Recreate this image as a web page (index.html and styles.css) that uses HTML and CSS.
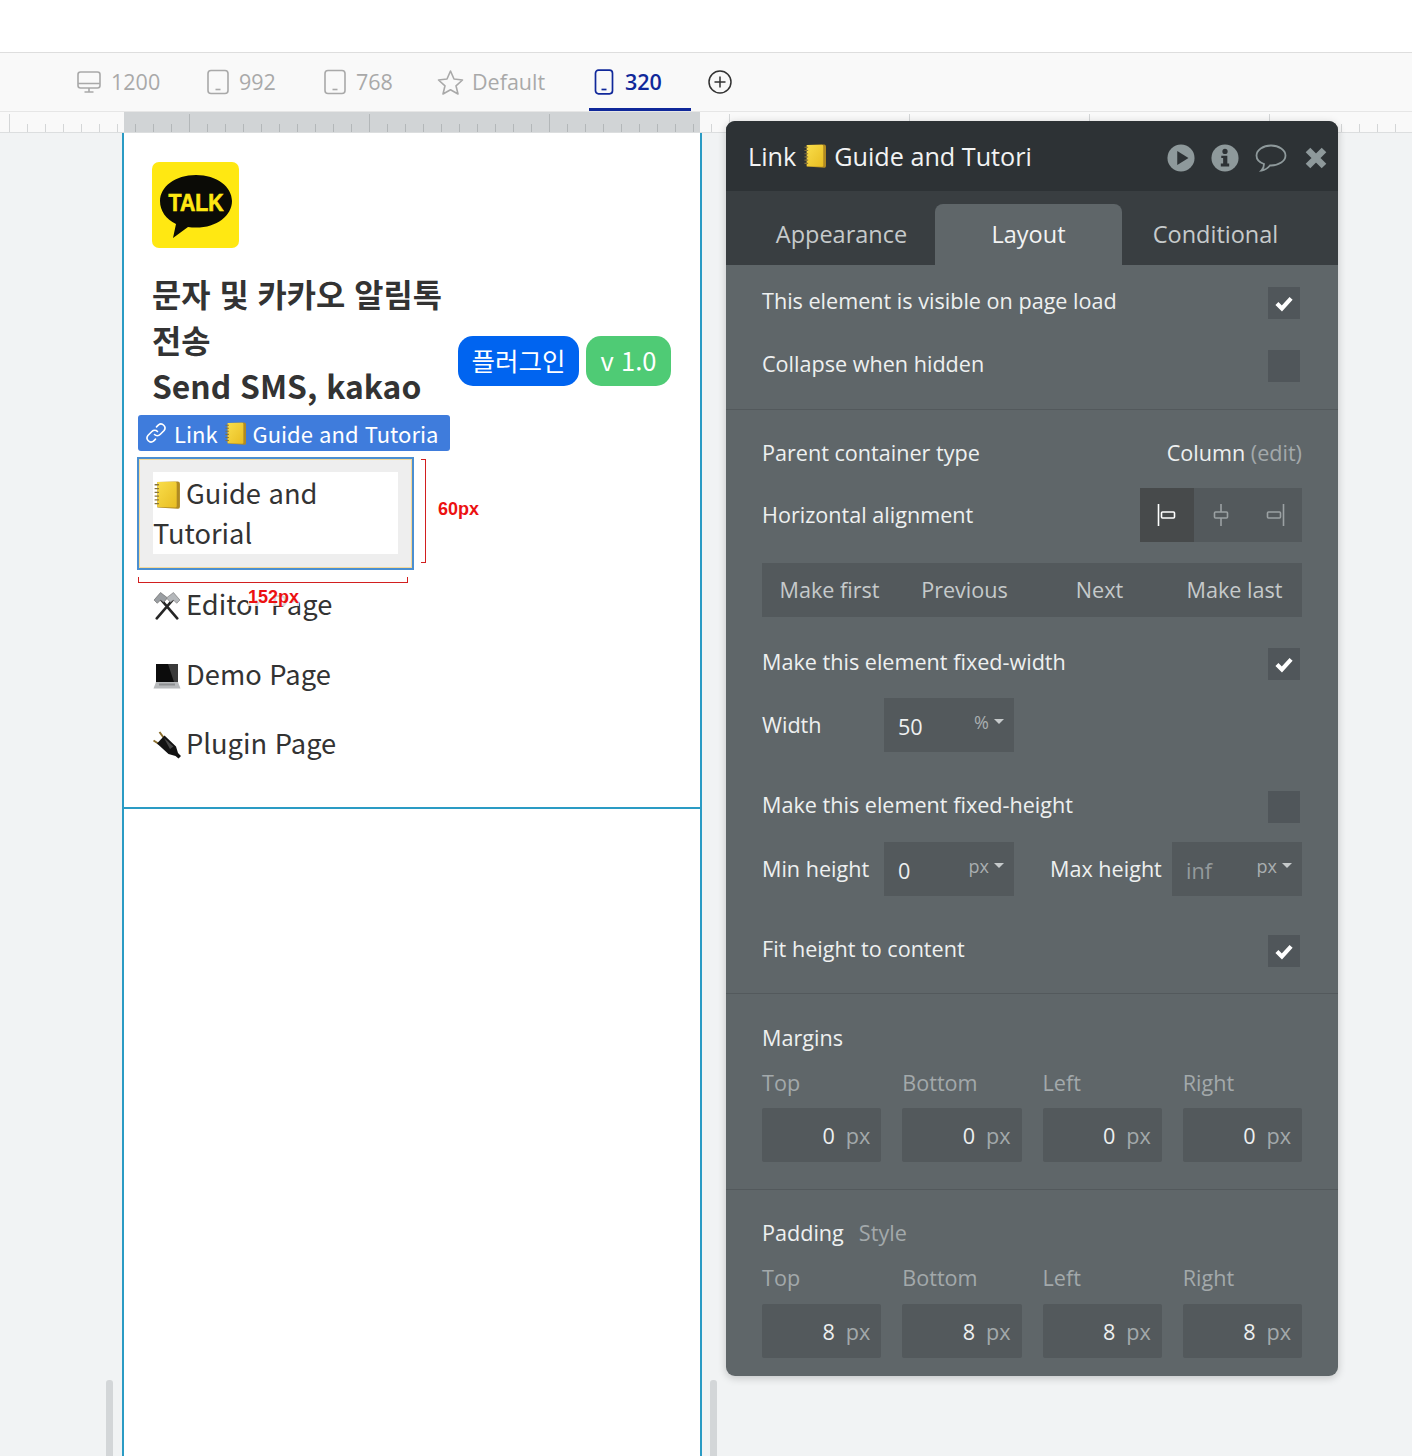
FILE: index.html
```html
<!DOCTYPE html>
<html lang="ko">
<head>
<meta charset="utf-8">
<title>Editor</title>
<link rel="stylesheet" href="styles.css">
</head>
<body>
<svg class="defs" width="0" height="0" aria-hidden="true">
  <defs>
    <linearGradient id="nb" x1="0" y1="0" x2="1" y2="1"><stop offset="0" stop-color="#f9dd4a"/><stop offset="1" stop-color="#e8bd22"/></linearGradient>
    <symbol id="notebook" viewBox="2 1 24 26">
      <path d="M5 2 L24 1.500 Q26 1.500 26 3.500 V25 Q26 27 24 26.800 L5 25.500 Z" fill="#b08a22"/>
      <path d="M5 2 L21.500 1.800 Q23 1.800 23 3.300 V24.500 Q23 25.800 21.500 25.700 L5 25.200 Z" fill="url(#nb)"/>
      <g fill="none" stroke="#87743c" stroke-width="1.200"><path d="M2.500 4.500h4M2.500 8h4M2.500 11.500h4M2.500 15h4M2.500 18.500h4M2.500 22h4"/></g>
    </symbol>
    <symbol id="tools" viewBox="1 1 26 26">
      <path d="M4.500 25.500 L19.500 8 M23.500 25.500 L8.500 8" stroke="#262626" stroke-width="2.400" stroke-linecap="round" fill="none"/>
      <path d="M2 8.500 L8 1.500 L14.500 6.500 L11 10.500 L8 8.500 L5 11.500 Z" fill="#9a9ea2" stroke="#666" stroke-width=".6"/>
      <path d="M26 8.500 L20 1.500 L13.500 6.500 L17 10.500 L20 8.500 L23 11.500 Z" fill="#b5b8bb" stroke="#777" stroke-width=".6"/>
    </symbol>
    <symbol id="laptop" viewBox="0 0 28 28">
      <path d="M3 2 H25 V20 H3 Z" fill="#0c0c0c"/>
      <path d="M15 2 H25 V20 H21 Z" fill="#3a3a3a"/>
      <path d="M3 20 H25 L27.500 26.500 H.5 Z" fill="#b8babc"/>
      <path d="M6 21.500 H22 V23.500 H6 Z" fill="#8e9092"/>
    </symbol>
    <symbol id="plug" viewBox="0 0 28 28">
      <path d="M.5 9.500 L6 13 M6.500 1 L10.500 6.500" stroke="#8a6d2c" stroke-width="2" fill="none"/>
      <path d="M4 12.500 L11.500 4.500 L23 15.500 L25 22 L28 25 L25.500 27.500 L22.500 25 L15.500 23 Z" fill="#121212"/>
      <path d="M11 7 L20.500 15.500 L17 18 Z" fill="#474747"/>
    </symbol>
    <symbol id="tick" viewBox="0 0 24 24">
      <path d="M3.500 12.500 L9.500 18.500 L20.500 6.500" fill="none" stroke="#fff" stroke-width="5"/>
    </symbol>
    <symbol id="tablet" viewBox="0 0 24 26">
      <rect x="2" y="1.500" width="20" height="23" rx="3" fill="none" stroke="currentColor" stroke-width="1.600"/>
      <path d="M9.500 20.500h5" stroke="currentColor" stroke-width="1.600"/>
    </symbol>
  </defs>
</svg>

<div class="shell">
  <div class="topbar"></div>

  <nav class="devices">
    <div class="device dev-1200">
      <svg class="dev-icon" width="24" height="24" viewBox="0 0 24 24"><rect x="1" y="2" width="22" height="16" rx="2.500" fill="none" stroke="currentColor" stroke-width="1.600"/><path d="M1 13.500h22M12 18v4M7.500 22h9" stroke="currentColor" stroke-width="1.600" fill="none"/></svg>
      <span>1200</span>
    </div>
    <div class="device dev-992"><svg class="dev-icon" width="24" height="26"><use href="#tablet"/></svg><span>992</span></div>
    <div class="device dev-768"><svg class="dev-icon" width="24" height="26"><use href="#tablet"/></svg><span>768</span></div>
    <div class="device dev-default">
      <svg class="dev-icon" width="27" height="27" viewBox="0 0 27 27"><path d="M13.500 2 L17 10 L25.500 11 L19 16.800 L21 25 L13.500 20.800 L6 25 L8 16.800 L1.500 11 L10 10 Z" fill="none" stroke="currentColor" stroke-width="1.600" stroke-linejoin="round"/></svg>
      <span>Default</span>
    </div>
    <div class="device device-active">
      <svg class="dev-icon" width="20" height="26" viewBox="0 0 20 26"><rect x="1.500" y="1.200" width="17" height="23.600" rx="3" fill="none" stroke="currentColor" stroke-width="1.700"/><path d="M7.500 20.500h5" stroke="currentColor" stroke-width="1.700"/></svg>
      <span>320</span>
    </div>
    <svg class="dev-add" width="24" height="24" viewBox="0 0 24 24"><circle cx="12" cy="12" r="11" fill="none" stroke="#333" stroke-width="1.500"/><path d="M12 6.500v11M6.500 12h11" stroke="#333" stroke-width="1.500"/></svg>
  </nav>

  <div class="ruler"><div class="ruler-active"></div></div>

  <main class="canvas">
    <section class="artboard">
      <span class="scroll scroll-l"></span>
      <span class="scroll scroll-r"></span>
      <div class="page">
        <div class="logo">
          <svg width="88" height="86" viewBox="0 0 88 86">
            <path d="M44 13 C23 13 8 25 8 39 C8 49 14 57 24 62 L21 76 L36 65 C38.500 65.400 41 65.600 44 65.600 C65 65.600 80 53.500 80 39 C80 25 65 13 44 13 Z" fill="#0b0b06"/>
            <text x="44" y="49" text-anchor="middle" class="logo-text" textLength="55" lengthAdjust="spacingAndGlyphs">TALK</text>
          </svg>
        </div>
        <div class="hero">
          <h1 class="title">문자 및 카카오 알림톡<br>전송<br>Send SMS, kakao</h1>
          <div class="badges">
            <span class="badge badge-blue">플러그인</span>
            <span class="badge badge-green">v 1.0</span>
          </div>
        </div>
        <ul class="menu">
          <li class="menu-item menu-selected">
            <div class="link-tag">
              <svg width="24" height="24" viewBox="0 0 24 24"><g fill="none" stroke="#fff" stroke-width="1.600" stroke-linecap="round"><path d="M10.500 13.500 a4 4 0 0 0 5.600 0 l4 -4 a4 4 0 0 0 -5.600 -5.600 l-2 2"/><path d="M13.500 10.500 a4 4 0 0 0 -5.600 0 l-4 4 a4 4 0 0 0 5.600 5.600 l2 -2"/></g></svg>
              <span>Link</span><svg class="tag-emoji" width="21" height="23"><use href="#notebook"/></svg><span>Guide and Tutoria</span>
            </div>
            <div class="menu-label"><svg class="emoji" width="28" height="28"><use href="#notebook"/></svg>Guide and Tutorial</div>
            <span class="bracket-v"></span>
            <span class="measure measure-h">60px</span>
            <span class="bracket-h"></span>
            <span class="measure measure-w">152px</span>
          </li>
          <li class="menu-item"><div class="menu-label"><svg class="emoji" width="28" height="28"><use href="#tools"/></svg>Editor Page</div></li>
          <li class="menu-item"><div class="menu-label"><svg class="emoji" width="28" height="28"><use href="#laptop"/></svg>Demo Page</div></li>
          <li class="menu-item"><div class="menu-label"><svg class="emoji" width="28" height="28"><use href="#plug"/></svg>Plugin Page</div></li>
        </ul>
      </div>
    </section>
  </main>

  <aside class="panel">
    <header class="panel-head">
      <div class="panel-title"><span>Link</span><svg width="22" height="24"><use href="#notebook"/></svg><span>Guide and Tutori</span></div>
      <div class="panel-actions">
        <svg width="28" height="28" viewBox="0 0 30 30"><circle cx="15" cy="15" r="14.500" fill="#8e999b"/><path d="M11 7.500 L23 15 L11 22.500 Z" fill="#2d3235"/></svg>
        <svg width="28" height="28" viewBox="0 0 30 30"><circle cx="15" cy="15" r="14.500" fill="#8e999b"/><circle cx="15" cy="8" r="2.800" fill="#2d3235"/><path d="M11 12.500 H17.500 V21 H19.500 V24 H10.500 V21 H13 V15 H11 Z" fill="#2d3235"/></svg>
        <svg width="32" height="28" viewBox="0 0 32 28"><path d="M16 1.500 C8 1.500 1.500 6 1.500 11.500 C1.500 15.500 4.500 18.500 9 20 C9 22.500 8 25 6.500 26.500 C10 26 13 24 15 21.500 L16 21.500 C24 21.500 30.500 17 30.500 11.500 C30.500 6 24 1.500 16 1.500 Z" fill="none" stroke="#8e999b" stroke-width="1.800"/></svg>
        <svg class="action-close" width="24" height="24" viewBox="0 0 24 24"><path d="M4 4 L20 20 M20 4 L4 20" stroke="#8e999b" stroke-width="6.500"/></svg>
      </div>
    </header>
    <div class="panel-tabs">
      <div class="tab">Appearance</div>
      <div class="tab tab-active">Layout</div>
      <div class="tab">Conditional</div>
    </div>
    <div class="panel-body">
      <section class="group group-visible">
        <div class="row row-check"><span>This element is visible on page load</span><span class="check"><svg width="20" height="20"><use href="#tick"/></svg></span></div>
        <div class="row row-check"><span>Collapse when hidden</span><span class="check"></span></div>
      </section>
      <section class="group group-layout">
        <div class="row row-field"><span>Parent container type</span><span>Column <span class="muted">(edit)</span></span></div>
        <div class="row row-field row-align">
          <span>Horizontal alignment</span>
          <div class="align-group">
            <div class="align-btn align-on"><svg width="22" height="22" viewBox="0 0 22 22"><path d="M2.500 0v22" stroke="#fff" stroke-width="1.600"/><rect x="5.500" y="8" width="13" height="6" rx="1" fill="none" stroke="#fff" stroke-width="1.600"/></svg></div>
            <div class="align-btn"><svg width="22" height="22" viewBox="0 0 22 22"><path d="M11 0v8M11 14v8" stroke="#9ba1a3" stroke-width="1.600"/><rect x="4.500" y="8" width="13" height="6" rx="1" fill="none" stroke="#9ba1a3" stroke-width="1.600"/></svg></div>
            <div class="align-btn"><svg width="22" height="22" viewBox="0 0 22 22"><path d="M19.500 0v22" stroke="#9ba1a3" stroke-width="1.600"/><rect x="3.500" y="8" width="13" height="6" rx="1" fill="none" stroke="#9ba1a3" stroke-width="1.600"/></svg></div>
          </div>
        </div>
        <div class="order-group"><span>Make first</span><span>Previous</span><span>Next</span><span>Make last</span></div>
        <div class="row row-check row-fixedw"><span>Make this element fixed-width</span><span class="check"><svg width="20" height="20"><use href="#tick"/></svg></span></div>
        <div class="row row-field row-width">
          <span class="field-label">Width</span>
          <div class="select"><span class="select-value">50</span><span class="select-unit">%</span><i class="caret"></i></div>
        </div>
        <div class="row row-check row-fixedh"><span>Make this element fixed-height</span><span class="check"></span></div>
        <div class="row row-field row-minmax">
          <span class="field-label">Min height</span>
          <div class="select"><span class="select-value">0</span><span class="select-unit">px</span><i class="caret"></i></div>
          <span class="max-label">Max height</span>
          <div class="select"><span class="select-value value-off">inf</span><span class="select-unit">px</span><i class="caret"></i></div>
        </div>
        <div class="row row-check row-fit"><span>Fit height to content</span><span class="check"><svg width="20" height="20"><use href="#tick"/></svg></span></div>
      </section>
      <section class="group group-box">
        <div class="box-title">Margins</div>
        <div class="box-grid">
          <span class="box-label">Top</span><span class="box-label">Bottom</span><span class="box-label">Left</span><span class="box-label">Right</span>
          <div class="box-input"><b>0</b><span>px</span></div>
          <div class="box-input"><b>0</b><span>px</span></div>
          <div class="box-input"><b>0</b><span>px</span></div>
          <div class="box-input"><b>0</b><span>px</span></div>
        </div>
      </section>
      <section class="group group-box group-last">
        <div class="box-title">Padding<span class="muted box-style">Style</span></div>
        <div class="box-grid">
          <span class="box-label">Top</span><span class="box-label">Bottom</span><span class="box-label">Left</span><span class="box-label">Right</span>
          <div class="box-input"><b>8</b><span>px</span></div>
          <div class="box-input"><b>8</b><span>px</span></div>
          <div class="box-input"><b>8</b><span>px</span></div>
          <div class="box-input"><b>8</b><span>px</span></div>
        </div>
      </section>
    </div>
  </aside>
</div>
</body>
</html>
```

FILE: styles.css
```css
* { box-sizing: border-box; }
html, body { margin: 0; padding: 0; }
body { width: 1412px; height: 1456px; overflow: hidden; background: #f1f3f4; font-family: "Open Sans", "Noto Sans CJK KR", sans-serif; }
.defs { position: absolute; }
.shell { position: relative; width: 1412px; height: 1456px; display: flex; flex-direction: column; overflow: hidden; }

.topbar { height: 53px; background: #fff; border-bottom: 1px solid #dedede; flex: none; }

.devices { height: 58px; flex: none; display: flex; align-items: center; padding-left: 77px; background: #f9f9f9; position: relative; }
.device { display: flex; align-items: center; gap: 9px; font-size: 21.500px; color: #a9a9a9; height: 58px; }
.device span { padding-bottom: 2px; }
.dev-1200 { width: 129px; gap: 10px; }
.dev-992 { width: 117px; }
.dev-768 { width: 114px; }
.dev-default { width: 152px; gap: 8px; }
.dev-icon { flex: none; }
.device-active { color: #10289a; font-weight: 600; border-bottom: 3px solid #10289a; width: 102px; padding: 3px 0 0 5px; gap: 11px; margin-right: 17px; }
.dev-add { flex: none; }

.ruler { height: 22px; flex: none; position: relative; background-color: #f9f9f9; border-top: 1px solid #e6e6e6; border-bottom: 1px solid #dcdedf;
  background-image: linear-gradient(to right, #d4d6d7 1px, transparent 1px), linear-gradient(to right, #d4d6d7 1px, transparent 1px);
  background-size: 18px 8px, 180px 18px; background-position: 9px bottom, 9px bottom; background-repeat: repeat-x; }
.ruler-active { position: absolute; left: 124px; top: 0; bottom: 0; width: 576px; background-color: #d1d4d6;
  background-image: linear-gradient(to right, #b3b7b9 1px, transparent 1px), linear-gradient(to right, #b3b7b9 1px, transparent 1px);
  background-size: 18px 8px, 180px 18px; background-position: 11px bottom, 65px bottom; background-repeat: repeat-x; }

.canvas { flex: 1; padding-left: 122px; }
.artboard { position: relative; width: 580px; height: 100%; background: #fff; border-left: 2px solid #2a9bc4; border-right: 2px solid #2a9bc4; }
.scroll { position: absolute; bottom: 0; width: 7px; height: 76px; background: #d3d6d8; border-radius: 3px 3px 0 0; }
.scroll-l { left: -18px; }
.scroll-r { right: -17px; }

.page { border-bottom: 2px solid #2a9bc4; padding: 29px 0 0 14px; height: 676px; font-family: "Noto Sans CJK KR", sans-serif; color: #333; }
.logo { width: 87px; height: 86px; margin-left: 14px; background: #ffe812; border-radius: 7px; overflow: hidden; }
.logo-text { font-family: "Liberation Sans", sans-serif; font-weight: 700; font-size: 24px; fill: #ffe812; stroke: #ffe812; stroke-width: .7px; }
.hero { display: flex; margin: 22px 0 0 14px; height: 136px; }
.title { margin: 0; width: 306px; font-size: 31.800px; line-height: 46px; font-weight: 700; color: #333; }
.badges { display: flex; gap: 7px; margin-top: 66px; height: 50px; }
.badge { display: flex; align-items: center; justify-content: center; height: 50px; padding-bottom: 3px; border-radius: 15px; color: #fff; font-size: 25.500px; font-weight: 400; }
.badge-blue { width: 121px; background: #0064f0; }
.badge-green { width: 85px; background: #4fcb75; }

.menu { list-style: none; margin: 52px 0 0; padding: 0; width: 275px; }
.menu-item { position: relative; padding: 13px 15px 0; height: 70px; font-size: 27.300px; line-height: 40px; color: #333; }
.menu-item:last-child { padding-top: 12px; }
.menu-label { width: 245px; }
.emoji { vertical-align: -5px; margin-right: 5px; }
.menu-selected { height: 111px; margin-bottom: 1px; padding-top: 14px; background: #eee; outline: 2px solid #4b8fd0; outline-offset: -1px; box-shadow: inset 0 0 0 2px #f5d99a; }
.menu-selected .menu-label { background: #fff; padding-bottom: 2px; }
.link-tag { position: absolute; left: 0; top: -43px; width: 312px; height: 36px; display: flex; align-items: center; padding-left: 6px; background: #3f7cdc; border-radius: 3px; color: #fff; font-size: 22px; line-height: 36px; white-space: nowrap; overflow: hidden; }
.link-tag svg { flex: none; }
.link-tag span:first-of-type { margin-left: 6px; }
.tag-emoji { margin: 0 7px 0 7px; }
.bracket-v { position: absolute; left: 283px; top: 1px; width: 5px; height: 104px; border: 1px solid #d21f1f; border-left: 0; }
.bracket-h { position: absolute; left: 0; top: 119px; width: 270px; height: 6px; border: 1px solid #d21f1f; border-top: 0; }
.measure { position: absolute; font-family: "Liberation Sans", sans-serif; font-weight: 700; font-size: 18px; line-height: 18px; color: #ec1111; }
.measure-h { left: 300px; top: 42px; }
.measure-w { left: 110px; top: 130px; z-index: 2; background: rgba(255,255,255,.8); }

.panel { position: absolute; left: 726px; top: 121px; width: 612px; height: 1255px; border-radius: 9px; overflow: hidden; box-shadow: 0 2px 8px rgba(0,0,0,.2); background: #5f6669; color: #eef0f0; font-size: 21.600px; }
.panel-head { height: 70px; background: #2d3235; display: flex; align-items: center; justify-content: space-between; padding: 0 10px 0 22px; }
.panel-title { display: flex; align-items: center; gap: 8px; font-size: 25.200px; color: #f2f3f3; }
.panel-actions { display: flex; align-items: center; gap: 16px; padding-top: 3px; }
.action-close { margin-left: 1px; }
.panel-tabs { height: 74px; background: #393e41; display: flex; padding: 13px 0 0 22px; }
.tab { width: 187px; display: flex; align-items: center; justify-content: center; font-size: 23.500px; color: #c6cacb; border-radius: 8px 8px 0 0; padding-bottom: 2px; }
.tab-active { background: #5f6669; color: #f2f3f3; }

.panel-body { padding: 0; }
.group { padding: 0 36px; border-bottom: 1px solid #53595c; }
.group-last { border-bottom: 0; }
.row { display: flex; align-items: center; justify-content: space-between; }
.group-visible { padding-top: 6px; padding-bottom: 12px; height: 145px; }
.row-check { height: 63px; padding-right: 2px; }
.row-check > span:first-child { margin-bottom: 5px; }
.row-field > span { margin-bottom: 2px; }
.check { width: 32px; height: 32px; background: #50565a; display: flex; align-items: center; justify-content: center; }
.muted { color: #a3a9ab; }

.group-layout { padding-top: 16px; height: 584px; }
.row-field { height: 54px; }
.row-align { margin-top: 8px; }
.align-group { display: flex; width: 162px; height: 54px; background: #53595c; }
.align-btn { width: 54px; display: flex; align-items: center; justify-content: center; }
.align-on { background: #474a4b; }
.order-group { margin-top: 21px; height: 54px; background: #53595c; display: grid; grid-template-columns: repeat(4, 1fr); align-items: center; justify-items: center; color: #c6cacb; padding-bottom: 2px; }
.row-fixedw { margin-top: 31px; height: 32px; }
.row-width { margin-top: 18px; justify-content: flex-start; }
.field-label { width: 122px; flex: none; }
.select { width: 130px; height: 54px; flex: none; background: #53595c; display: flex; padding: 0 10px 0 14px; position: relative; }
.select-value { margin: auto auto auto 0; padding-top: 3px; }
.value-off { color: #959b9d; }
.select-unit { font-size: 18px; color: #a9aeb0; margin-top: 12px; line-height: 24px; }
.caret { width: 0; height: 0; margin: 21px 0 0 5px; border-left: 5px solid transparent; border-right: 5px solid transparent; border-top: 5px solid #c6cacb; }
.row-fixedh { margin-top: 39px; height: 32px; }
.row-minmax { margin-top: 19px; justify-content: flex-start; }
.max-label { margin-left: 36px; width: 122px; flex: none; }
.row-fit { margin-top: 39px; height: 32px; }

.group-box { padding-top: 32px; height: 196px; }
.group-last { padding-top: 31px; }
.group-last .box-grid { row-gap: 14px; }
.box-title { height: 24px; line-height: 24px; }
.box-style { margin-left: 15px; }
.box-grid { margin-top: 21px; display: grid; grid-template-columns: repeat(4, 1fr); column-gap: 21px; row-gap: 13px; }
.box-label { height: 24px; line-height: 24px; color: #a3a9ab; }
.box-input { height: 54px; background: #53595c; border-radius: 2px; display: flex; align-items: center; justify-content: flex-end; gap: 11px; padding-right: 11px; }
.box-input b { font-weight: 400; }
.box-input span { color: #a3a9ab; }
```
